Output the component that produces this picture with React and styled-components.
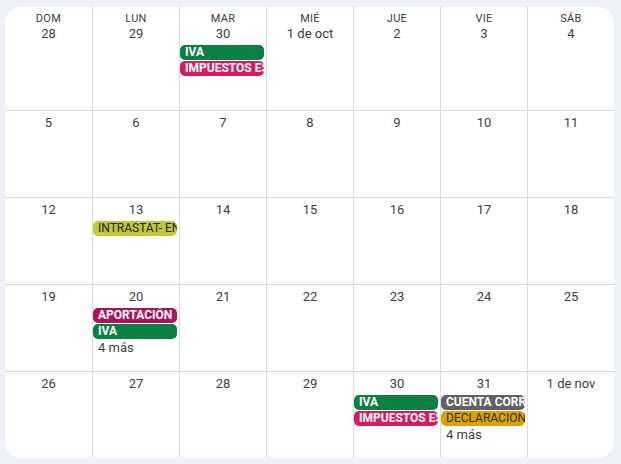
import React from "react";
import styled, { createGlobalStyle } from "styled-components";

const Global = createGlobalStyle`
  html, body { margin: 0; padding: 0; background: #eef2f8; }
  body { font-family: Roboto, "Noto Sans", Arial, sans-serif; }
`;

const Page = styled.div`
  padding: 7px 7px 6px 5px;
`;

const Card = styled.div`
  background: #ffffff;
  border-radius: 16px;
  overflow: hidden;
  display: grid;
  grid-template-columns: repeat(7, 87px);
  grid-template-rows: 103px repeat(4, 87px);
  width: 609px;
`;

const Cell = styled.div`
  box-sizing: border-box;
  min-width: 0;
  border-left: ${(p) => (p.$first ? "none" : "1px solid #dadce0")};
  border-top: ${(p) => (p.$top ? "none" : "1px solid #dadce0")};
  padding-top: ${(p) => (p.$top ? "5px" : "4px")};
  display: flex;
  flex-direction: column;
  overflow: hidden;
`;

const DayName = styled.div`
  font-size: 11px;
  line-height: 14px;
  font-weight: 400;
  color: #3c4043;
  text-align: center;
  letter-spacing: 0.3px;
`;

const DateNum = styled.div`
  font-size: 13px;
  line-height: 16px;
  color: #3c4043;
  text-align: center;
`;

const Events = styled.div`
  margin-top: 3px;
  display: flex;
  flex-direction: column;
  gap: 1px;
`;

const Chip = styled.div`
  height: 15px;
  margin-right: 2px;
  border-radius: 5px;
  background: ${(p) => p.$bg};
  color: ${(p) => p.$fg || "#ffffff"};
  font-size: 12px;
  font-weight: ${(p) => (p.$fg ? 400 : 700)};
  line-height: 15px;
  padding-left: 5px;
  white-space: nowrap;
  overflow: hidden;
`;

const More = styled.div`
  font-size: 13px;
  line-height: 16px;
  color: #3c4043;
  padding-left: 5px;
  margin-top: 1px;
`;

const GREEN = "#0b8043";
const PINK = "#d81b60";

const days = ["DOM", "LUN", "MAR", "MIÉ", "JUE", "VIE", "SÁB"];

const weeks = [
  [
    { d: "28" },
    { d: "29" },
    { d: "30", ev: [{ t: "IVA", bg: GREEN }, { t: "IMPUESTOS ESPECIALES", bg: PINK }] },
    { d: "1 de oct" },
    { d: "2" },
    { d: "3" },
    { d: "4" },
  ],
  [{ d: "5" }, { d: "6" }, { d: "7" }, { d: "8" }, { d: "9" }, { d: "10" }, { d: "11" }],
  [
    { d: "12" },
    { d: "13", ev: [{ t: "INTRASTAT- ENERO", bg: "#c0ca33", fg: "#202124" }] },
    { d: "14" },
    { d: "15" },
    { d: "16" },
    { d: "17" },
    { d: "18" },
  ],
  [
    { d: "19" },
    {
      d: "20",
      ev: [{ t: "APORTACIÓN", bg: "#ad1457" }, { t: "IVA", bg: GREEN }],
      more: "4 más",
    },
    { d: "21" },
    { d: "22" },
    { d: "23" },
    { d: "24" },
    { d: "25" },
  ],
  [
    { d: "26" },
    { d: "27" },
    { d: "28" },
    { d: "29" },
    { d: "30", ev: [{ t: "IVA", bg: GREEN }, { t: "IMPUESTOS ESPECIALES", bg: PINK }] },
    {
      d: "31",
      ev: [
        { t: "CUENTA CORRIENTE", bg: "#616161" },
        { t: "DECLARACIONES", bg: "#d6a40a", fg: "#3a2a00" },
      ],
      more: "4 más",
    },
    { d: "1 de nov" },
  ],
];

export default function App() {
  return (
    <>
      <Global />
      <Page>
        <Card>
          {weeks.map((week, wi) =>
            week.map((c, di) => (
              <Cell key={`${wi}-${di}`} $first={di === 0} $top={wi === 0}>
                {wi === 0 && <DayName>{days[di]}</DayName>}
                <DateNum>{c.d}</DateNum>
                {c.ev && (
                  <Events>
                    {c.ev.map((e, i) => (
                      <Chip key={i} $bg={e.bg} $fg={e.fg}>
                        {e.t}
                      </Chip>
                    ))}
                  </Events>
                )}
                {c.more && <More>{c.more}</More>}
              </Cell>
            ))
          )}
        </Card>
      </Page>
    </>
  );
}
